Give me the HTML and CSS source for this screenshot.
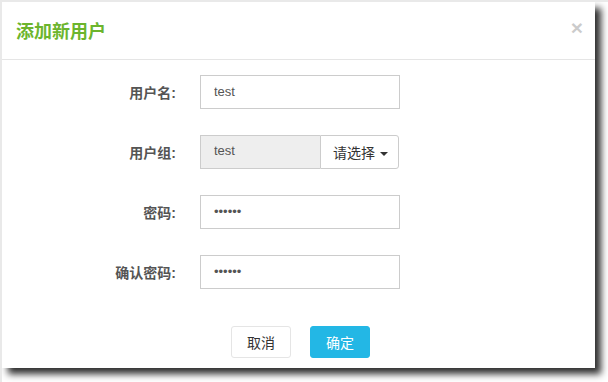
FILE: index.html
```html
<!DOCTYPE html>
<html lang="zh-CN">
<head>
    <meta charset="UTF-8">
    <title>添加新用户</title>
    <link rel="stylesheet" href="styles.css">
</head>
<body>
    <div class="modal">
        <div class="modal-header">
            <h4 class="modal-title">添加新用户</h4>
            <button class="close" type="button">&times;</button>
        </div>

        <form class="modal-body">
            <div class="form-row">
                <label class="form-label">用户名:</label>
                <input class="form-input" type="text" value="test">
            </div>
            <div class="form-row">
                <label class="form-label">用户组:</label>
                <div class="input-group">
                    <input class="form-input readonly" type="text" value="test" readonly>
                    <button class="select-btn" type="button">请选择 <span class="caret"></span></button>
                </div>
            </div>
            <div class="form-row">
                <label class="form-label">密码:</label>
                <input class="form-input" type="password" value="123456">
            </div>
            <div class="form-row">
                <label class="form-label">确认密码:</label>
                <input class="form-input" type="password" value="123456">
            </div>
        </form>

        <div class="modal-footer">
            <button class="btn" type="button">取消</button>
            <button class="btn btn-primary" type="button">确定</button>
        </div>
    </div>
</body>
</html>
```

FILE: styles.css
```css
* {
    margin: 0;
    padding: 0;
    box-sizing: border-box;
}

body {
    font-family: "Helvetica Neue", "Liberation Sans", "Noto Sans CJK SC", sans-serif;
    font-size: 14px;
    color: #333;
    background: #fff;
    min-height: 100vh;
    border-top: 2px solid #e9e9e9;
    border-left: 2px solid #e9e9e9;
}

.modal {
    width: 593px;
    height: 366px;
    background: #fff;
    box-shadow: 6px 6px 7px rgba(0,0,0,0.82);
}

.modal-header {
    height: 58px;
    display: flex;
    align-items: center;
    justify-content: space-between;
    padding: 0 12px 0 14px;
    border-bottom: 1px solid #e5e5e5;
}

.modal-title {
    color: #6cb52d;
    font-size: 18px;
    font-weight: bold;
    margin-top: -2px;
}

.close {
    background: none;
    border: none;
    font-size: 21px;
    font-weight: bold;
    line-height: 1;
    color: #000;
    opacity: 0.2;
    font-family: "Liberation Sans", sans-serif;
    margin-top: -6px;
    cursor: pointer;
}

.modal-body {
    padding-top: 15px;
    display: flex;
    flex-direction: column;
    gap: 26px;
}

.form-row {
    display: grid;
    grid-template-columns: 174px 200px;
    column-gap: 24px;
    align-items: center;
}

.form-label {
    text-align: right;
    font-weight: bold;
    font-size: 14px;
    color: #555;
}

.form-input {
    height: 34px;
    width: 200px;
    border: 1px solid #ccc;
    padding: 0 13px 2px;
    font-family: inherit;
    font-size: 13px;
    color: #555;
    background: #fff;
    outline: none;
}

.input-group {
    display: flex;
    width: 199px;
}

.form-input.readonly {
    flex: 1;
    width: auto;
    min-width: 0;
    background: #eee;
    border-right: none;
    padding-bottom: 4px;
}

.select-btn {
    flex-shrink: 0;
    width: 79px;
    height: 34px;
    border: 1px solid #ccc;
    border-radius: 0 3px 3px 0;
    background: #fff;
    font-family: inherit;
    font-size: 14px;
    color: #333;
    padding-left: 2px;
    white-space: nowrap;
}

.caret {
    display: inline-block;
    width: 0;
    height: 0;
    margin-left: 1px;
    vertical-align: middle;
    border-top: 4px solid #333;
    border-left: 4px solid transparent;
    border-right: 4px solid transparent;
}

.modal-footer {
    margin-top: 37px;
    display: flex;
    justify-content: center;
    gap: 19px;
    padding-left: 4px;
}

.btn {
    width: 60px;
    height: 32px;
    border: 1px solid #e5e5e5;
    border-radius: 3px;
    background: #fff;
    font-family: inherit;
    font-size: 14px;
    color: #333;
    cursor: pointer;
}

.btn-primary {
    background: #23b7e5;
    border-color: #23b7e5;
    color: #fff;
}
```
